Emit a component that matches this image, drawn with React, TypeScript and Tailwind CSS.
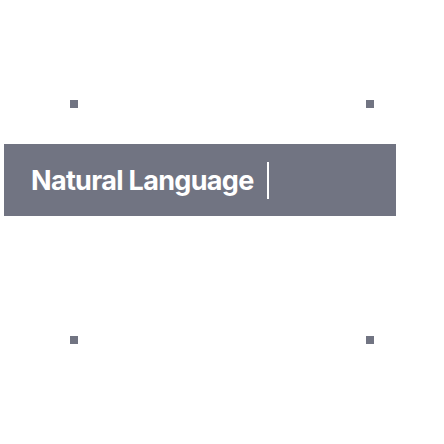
export default function App() {
  return (
    <div className="w-[444px] h-[444px] bg-white pt-[100px]" style={{ fontFamily: 'Inter, "Noto Sans", sans-serif' }}>
      <div className="flex justify-between px-[70px]">
        <div className="w-2 h-2 bg-[#717482]" />
        <div className="w-2 h-2 bg-[#717482]" />
      </div>
      <div className="mt-[36px] ml-[4px] w-[392px] h-[72px] bg-[#717482] flex items-center pl-[27px]">
        <span className="text-white text-[27px] font-bold tracking-[-0.025em] leading-none">Natural Language</span>
        <span className="ml-[13px] w-[2px] h-[37px] bg-white" />
      </div>
      <div className="mt-[120px] flex justify-between px-[70px]">
        <div className="w-2 h-2 bg-[#717482]" />
        <div className="w-2 h-2 bg-[#717482]" />
      </div>
    </div>
  );
}
